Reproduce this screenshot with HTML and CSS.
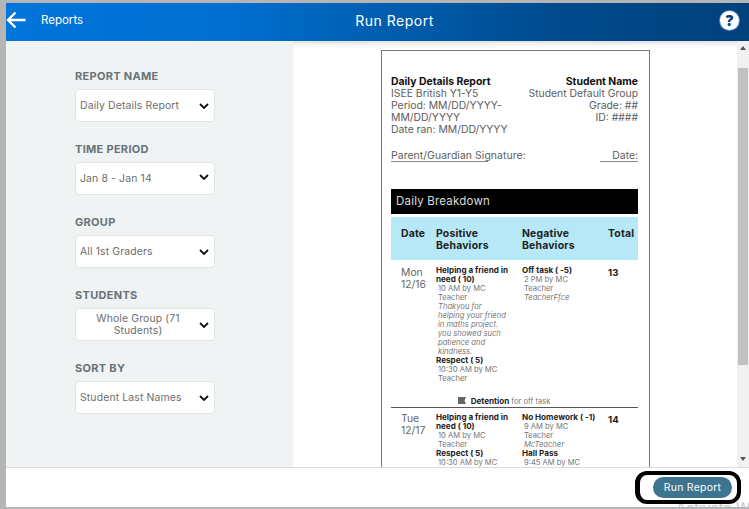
FILE: index.html
```html
<!DOCTYPE html>
<html lang="en">
<head>
<meta charset="utf-8">
<title>Run Report</title>
<link rel="stylesheet" href="styles.css">
</head>
<body>
<div class="app">
  <header class="topbar">
    <div class="top-left">
      <svg class="back" viewBox="0 0 20 18" width="20" height="18"><path d="M19.5 9H2M9.5 1.5 2 9l7.5 7.5" fill="none" stroke="#fff" stroke-width="2.4"/></svg>
      <span class="crumb">Reports</span>
    </div>
    <h1 class="title">Run Report</h1>
    <div class="help">?</div>
  </header>
  <div class="body">
    <aside class="side">
      <div class="field"><div class="label">REPORT NAME</div><div class="select"><span class="val">Daily Details Report</span><svg class="chev" viewBox="0 0 10 6"><path d="M1 1l4 4 4-4" fill="none" stroke="#111" stroke-width="1.8"/></svg></div></div>
      <div class="field"><div class="label">TIME PERIOD</div><div class="select"><span class="val">Jan 8 - Jan 14</span><svg class="chev up" viewBox="0 0 10 6"><path d="M1 1l4 4 4-4" fill="none" stroke="#111" stroke-width="1.8"/></svg></div></div>
      <div class="field"><div class="label">GROUP</div><div class="select"><span class="val">All 1st Graders</span><svg class="chev" viewBox="0 0 10 6"><path d="M1 1l4 4 4-4" fill="none" stroke="#111" stroke-width="1.8"/></svg></div></div>
      <div class="field"><div class="label">STUDENTS</div><div class="select"><span class="val center">Whole Group (71 Students)</span><svg class="chev" viewBox="0 0 10 6"><path d="M1 1l4 4 4-4" fill="none" stroke="#111" stroke-width="1.8"/></svg></div></div>
      <div class="field"><div class="label">SORT BY</div><div class="select"><span class="val">Student Last Names</span><svg class="chev" viewBox="0 0 10 6"><path d="M1 1l4 4 4-4" fill="none" stroke="#111" stroke-width="1.8"/></svg></div></div>
    </aside>
    <main class="main">
      <article class="paper">
        <div class="paper-head">
          <div class="info">
            <b>Daily Details Report</b>
            <div>ISEE British Y1-Y5</div>
            <div>Period: MM/DD/YYYY-<br>MM/DD/YYYY</div>
            <div>Date ran: MM/DD/YYYY</div>
          </div>
          <div class="info right">
            <b>Student Name</b>
            <div>Student Default Group</div>
            <div>Grade: ##</div>
            <div>ID: ####</div>
          </div>
        </div>
        <div class="sign">
          <span class="sig">Parent/Guardian Signature:</span>
          <span class="sig-date">Date:</span>
        </div>
        <div class="band">Daily Breakdown</div>
        <div class="row thead">
          <div>Date</div><div>Positive Behaviors</div><div>Negative Behaviors</div><div>Total</div>
        </div>
        <div class="row entry">
          <div class="day">Mon 12/16</div>
          <div class="beh">
            <b>Helping a friend in need ( 10)</b>
            <p>10 AM by MC Teacher</p>
            <p><i>Thakyou for helping your friend in maths project. you showed such patience and kindness.</i></p>
            <b>Respect ( 5)</b>
            <p>10:30 AM by MC Teacher</p>
          </div>
          <div class="beh">
            <b>Off task ( -5)</b>
            <p>2 PM by MC Teacher</p>
            <p><i>TeacherFfce</i></p>
          </div>
          <div class="tot">13</div>
        </div>
        <div class="detention">
          <svg viewBox="0 0 8 7" width="8" height="7"><path d="M0 0h8L6.5 3.5 8 7H0z" fill="#666"/></svg>
          <b>Detention</b> for off task
        </div>
        <div class="row entry second">
          <div class="day">Tue 12/17</div>
          <div class="beh">
            <b>Helping a friend in need ( 10)</b>
            <p>10 AM by MC Teacher</p>
            <b>Respect ( 5)</b>
            <p>10:30 AM by MC Teacher</p>
          </div>
          <div class="beh">
            <b>No Homework ( -1)</b>
            <p>9 AM by MC Teacher</p>
            <p><i>McTeacher</i></p>
            <b>Hall Pass</b>
            <p>9:45 AM by MC Teacher</p>
          </div>
          <div class="tot">14</div>
        </div>
      </article>
    </main>
    <div class="scrollbar">
      <span class="arrow"></span>
      <span class="thumb"></span>
      <span class="arrow down"></span>
    </div>
  </div>
  <footer class="foot">
    <div class="focus"><button class="run">Run Report</button></div>
    <span class="watermark">Activate Windows</span>
  </footer>
</div>
</body>
</html>
```
FILE: styles.css
```css
* { box-sizing: border-box; }
html, body { margin: 0; height: 100%; overflow: hidden; }
body {
  background: #b5b5b5;
  padding: 3px 0 2px 6px;
  font-family: "Inter", "Open Sans", sans-serif;
  color: #666;
}
.app { height: 504px; display: flex; flex-direction: column; background: #fff; }

.topbar {
  height: 38px;
  flex: none;
  display: grid;
  grid-template-columns: 1fr auto 1fr;
  align-items: center;
  background: linear-gradient(90deg, #0075dc 0%, #006fd0 30%, #004a8c 75%, #00417c 100%);
  color: #fff;
}
.top-left { display: flex; align-items: center; gap: 15px; }
.back { margin-top: -4px; display: block; }
.crumb { font-size: 11.5px; margin-top: -4px; }
.title { margin: -4px 0 0; font-size: 14px; font-weight: 400; letter-spacing: .5px; transform: translateX(17px); }
.help {
  justify-self: end;
  width: 19px; height: 19px;
  margin: -4px 10px 0 0;
  border-radius: 50%;
  background: #fff;
  box-shadow: 0 0 0 1px #5f8db8;
  color: #00417c;
  font: 800 15px/19px "Open Sans", sans-serif;
  text-align: center;
}

.body { flex: 1; min-height: 0; display: flex; }
.side {
  width: 287px;
  flex: none;
  background: #eff3f4;
  padding: 29px 0 0 69px;
  display: flex;
  flex-direction: column;
  gap: 21px;
}
.label { font-size: 11px; font-weight: 700; line-height: 13px; color: #6a7276; letter-spacing: .3px; margin-bottom: 6px; }
.select {
  width: 140px; height: 33px;
  background: #fff;
  border: 1px solid #e2e4e6;
  border-radius: 4px;
  display: flex;
  align-items: center;
  padding: 0 4px;
  font-size: 10.4px;
  line-height: 12px;
  letter-spacing: .15px;
}
.val { flex: 1; min-width: 0; color: #6d6d6d; }
.val.center { text-align: center; padding: 0 11px 0 8px; }
.chev { width: 10px; height: 6px; margin-right: 1px; flex: none; }
.chev.up { margin-top: -3px; }

.main { flex: 1; min-width: 0; overflow: hidden; padding: 9px 0 0 88px; box-shadow: inset 0 6px 6px -5px #ccc; }
.paper {
  width: 269px;
  height: 420px;
  overflow: hidden;
  border: 1px solid #777;
  border-bottom: 0;
  padding: 25px 11px 0 9px;
  font-size: 10.4px;
  line-height: 12px;
}
.paper-head { display: flex; justify-content: space-between; color: #5d5d5d; }
.info { width: 130px; }
.info b { color: #111; display: block; }
.info.right { text-align: right; width: 130px; }
.sign { display: flex; justify-content: space-between; margin-top: 14px; height: 13px; color: #5d5d5d; }
.sig { width: 97px; white-space: nowrap; border-bottom: 1px solid #888; height: 12px; letter-spacing: .08px; }
.sig-date { width: 38px; text-align: right; border-bottom: 1px solid #888; height: 12px; }
.band {
  background: #000; color: #ddd;
  margin-top: 26px;
  height: 25px;
  line-height: 24px;
  padding-left: 5px;
  font-size: 11.5px;
  letter-spacing: .2px;
}
.row { display: grid; grid-template-columns: 45px 86px 86px 30px; }
.thead {
  margin-top: 3px;
  height: 43px;
  background: #b6e8f8;
  color: #222;
  font-weight: 700;
  font-size: 10.4px;
  line-height: 12px;
  padding-top: 11px;
  letter-spacing: .2px;
}
.thead > div:first-child { padding-left: 10px; }
.entry { padding-top: 6px; }
.entry.second { padding-top: 5px; }
.second .day { padding-top: 0; }
.day { font-size: 10.4px; line-height: 12px; padding: 1px 0 0 10px; color: #666; width: 40px; }
.beh { font-size: 7.6px; line-height: 9px; color: #777; padding-right: 4px; }
.beh b { display: block; color: #222; font-weight: 700; font-size: 8.1px; }
.beh p { margin: 0 0 0 2px; padding-right: 12px; }
.tot { font-size: 9.6px; font-weight: 700; color: #222; padding-top: 1px; }
.detention { font-size: 7.6px; line-height: 9px; text-align: center; margin-top: 14px; color: #777; padding-bottom: 1px; border-bottom: 1px solid #555; height: 11px; padding-right: 21px; }
.detention b { color: #222; font-size: 8.1px; }
.detention svg { margin-right: 3px; }

.scrollbar { width: 12px; flex: none; background: #f1f1f1; display: flex; flex-direction: column; align-items: center; padding: 5px 0 6px; }
.arrow { width: 0; height: 0; border: 3px solid transparent; border-top: 0; border-bottom: 4px solid #555; margin-bottom: 18px; }
.arrow.down { border-bottom: 0; border-top: 4px solid #555; margin: auto 0 0; }
.thumb { width: 10px; height: 297px; background: #c1c1c1; }

.foot {
  height: 40px;
  flex: none;
  border-top: 1px solid #ddd;
  display: flex;
  justify-content: flex-end;
  position: relative;
  overflow: hidden;
  background: #fff;
}
.focus {
  width: 106px; height: 33px;
  margin: 3px 8px 0 0;
  border: 4px solid #000;
  border-left-width: 5px;
  border-radius: 12px;
  padding: 2px 0 0 13px;
  position: relative;
  z-index: 1;
}
.run {
  display: block;
  width: 79px; height: 21px;
  border: 0; border-radius: 10.5px;
  background: #3d7590;
  color: #fff;
  font: 10.4px/21px "Inter", sans-serif;
  letter-spacing: .3px;
  padding: 0;
}
.watermark { position: absolute; left: 670px; top: 31px; font-size: 14.5px; color: #c8c8c8; white-space: nowrap; }
```
